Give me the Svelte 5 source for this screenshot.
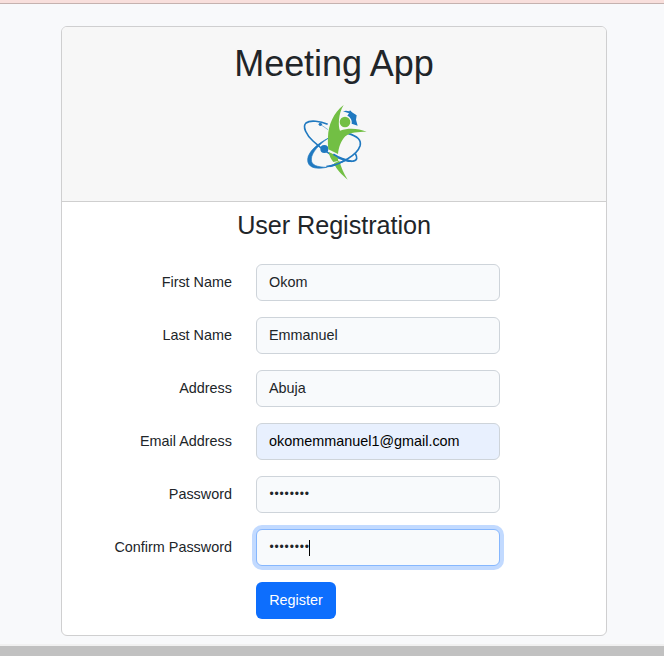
<script>
  const fields = [
    { label: 'First Name', value: 'Okom' },
    { label: 'Last Name', value: 'Emmanuel' },
    { label: 'Address', value: 'Abuja' },
    { label: 'Email Address', value: 'okomemmanuel1@gmail.com', kind: 'autofill' },
    { label: 'Password', value: '••••••••', kind: 'secret' },
    { label: 'Confirm Password', value: '••••••••', kind: 'secret focus' }
  ];
</script>

<div class="page">
  <div class="topbar"></div>
  <main class="card">
    <header>
      <h1>Meeting App</h1>
      <svg class="logo" viewBox="0 0 240 264" aria-hidden="true">
        <g fill="none" stroke="#2079c0">
          <path d="M98 79C76 70 46 65 33 75C21 86 35 112 54 129C80 154 116 178 151 187C169 192 184 190 185 181C186 176 183 171 181 167" stroke-width="5" />
          <path d="M94 206C137 199 186 172 195 144C200 127 188 114 158 106" stroke-width="5" />
          <path d="M99 121C67 137 39 162 38 184C37 209 61 215 95 208C66 207 48 202 49 183C50 163 73 139 99 121Z" fill="#2079c0" stroke-width="2" />
          <path d="M76 79L99 95" stroke-width="1.5" />
        </g>
        <circle cx="76" cy="79" r="5" fill="#2079c0" />
        <circle cx="88" cy="153" r="12" fill="#2079c0" />
        <path d="M144 40L153 38L163 40L165 37L171 43L185 52L183 65L188 83L170 77C172 66 166 57 157 53L162 46Z" fill="#2079c0" />
        <circle cx="150" cy="72" r="16" fill="#72bf44" />
        <path d="M146 21C116 43 99 83 99 117C98 132 99 144 100 154L129 168C131 148 138 128 151 115C166 101 189 102 215 101C190 92 163 89 135 98C129 84 130 46 146 21Z" fill="#72bf44" />
        <path d="M101 162L127 174L130 190L117 196C125 216 140 230 158 245C146 226 138 207 133 188L115 192C108 184 103 174 101 162Z" fill="#72bf44" />
        <path d="M115 169C128 177 153 187 170 190M104 205C123 201 141 193 155 184" fill="none" stroke="#2079c0" stroke-width="5" />
      </svg>
    </header>
    <section>
      <h2>User Registration</h2>
      <form>
        {#each fields as field}
          <div class="row">
            <span class="label">{field.label}</span>
            <div class="control {field.kind ?? ''}">
              {field.value}{#if field.kind === 'secret focus'}<i class="caret"></i>{/if}
            </div>
          </div>
        {/each}
        <button type="button">Register</button>
      </form>
    </section>
  </main>
  <div class="scrollbar"></div>
</div>

<style>
  :global(body) { margin: 0; overflow: hidden; }
  .page {
    box-sizing: border-box;
    width: 664px;
    height: 656px;
    display: flex;
    flex-direction: column;
    align-items: center;
    background: #f8f9fb;
    color: #212529;
    font: 14.4px/21.6px "Liberation Sans", Arial, sans-serif;
  }
  .topbar {
    box-sizing: border-box;
    align-self: stretch;
    height: 4px;
    background: #f8dfdc;
    border-bottom: 1px solid #c5b2af;
  }
  .card {
    box-sizing: border-box;
    width: 546px;
    height: 610px;
    margin: 22px 0 0 4px;
    border: 1px solid #cfcfd0;
    border-radius: 6px;
    background: #fff;
    overflow: hidden;
  }
  header {
    box-sizing: border-box;
    height: 175px;
    padding-top: 15px;
    display: flex;
    flex-direction: column;
    align-items: center;
    background: #f7f7f7;
    border-bottom: 1px solid #cfcfcf;
  }
  h1, h2 { margin: 0; font-weight: 400; text-align: center; }
  h1 { font-size: 36px; line-height: 43px; letter-spacing: -0.06px; }
  h2 { font-size: 25.2px; line-height: 30px; padding-top: 8px; letter-spacing: -0.05px; }
  .logo { width: 80px; height: 88px; margin: 13px 0 0 2px; }
  form { padding-top: 24px; }
  .row { display: flex; align-items: center; height: 37px; margin-bottom: 16px; }
  .label { width: 170px; margin-right: 24px; text-align: right; }
  .control {
    box-sizing: border-box;
    display: flex;
    align-items: center;
    width: 244px;
    height: 37px;
    padding: 0 12px;
    border: 1px solid #ced4da;
    border-radius: 6px;
    background: #f8fafc;
  }
  .autofill { background: #e8f0fe; color: #000; }
  .secret { padding-left: 12.5px; font-size: 12px; letter-spacing: 0.84px; }
  .focus { border-color: #86b7fe; box-shadow: 0 0 0 4px #c2daff; }
  .caret { width: 1px; height: 16px; background: #000; margin-left: -0.5px; }
  button {
    display: block;
    width: 80px;
    height: 37px;
    margin-left: 194px;
    padding: 0;
    border: 0;
    border-radius: 6px;
    background: #0d6efd;
    color: #fff;
    font: inherit;
  }
  .scrollbar {
    box-sizing: border-box;
    align-self: stretch;
    height: 12px;
    margin-top: auto;
    background: #c1c1c1;
    border-top: 2px solid #f1f1f1;
  }
</style>
